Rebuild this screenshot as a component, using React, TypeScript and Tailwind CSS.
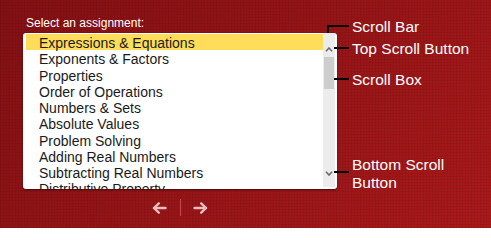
import React from "react";

const items = [
  "Expressions & Equations",
  "Exponents & Factors",
  "Properties",
  "Order of Operations",
  "Numbers & Sets",
  "Absolute Values",
  "Problem Solving",
  "Adding Real Numbers",
  "Subtracting Real Numbers",
  "Distributive Property",
];

function Chevron({ up }: { up?: boolean }) {
  return (
    <svg width="8" height="5" viewBox="0 0 8 5" className="block">
      <path
        d={up ? "M1 4.2 L4 1 L7 4.2" : "M1 0.8 L4 4 L7 0.8"}
        fill="none"
        stroke="#6b6b6b"
        strokeWidth="1.6"
      />
    </svg>
  );
}

function Arrow({ left }: { left?: boolean }) {
  return (
    <svg width="15" height="12" viewBox="0 0 15 12" className="block">
      <g
        fill="none"
        stroke="#eebcbc"
        strokeWidth="2.4"
        strokeLinecap="round"
        strokeLinejoin="round"
        transform={left ? undefined : "translate(15 0) scale(-1 1)"}
      >
        <path d="M2 6 H13.5" />
        <path d="M6.8 1.4 L2 6 L6.8 10.6" />
      </g>
    </svg>
  );
}

export default function App() {
  return (
    <div className="relative w-[491px] h-[228px] overflow-hidden font-['Liberation_Sans',Arial,sans-serif] bg-[repeating-linear-gradient(90deg,rgba(0,0,0,0.05)_0px,rgba(0,0,0,0.05)_1px,transparent_1px,transparent_3px),repeating-linear-gradient(0deg,rgba(0,0,0,0.05)_0px,rgba(0,0,0,0.05)_1px,transparent_1px,transparent_3px),linear-gradient(135deg,#821013,#a9191a)]">
      <div className="flex flex-col pl-[23px] pt-[14px] w-[337px]">
        <div className="pl-[3px] h-[19px] text-[12px] leading-[18px] text-white">
          Select an assignment:
        </div>
        <div className="flex w-[314px] h-[155.5px] bg-white rounded-[3px] overflow-hidden shadow-[0_1px_2px_rgba(0,0,0,0.55)]">
          <div className="flex-1 pt-[1px] pl-[3px] overflow-hidden">
            {items.map((t, i) => (
              <div
                key={t}
                className={
                  i === 0
                    ? "h-[16.25px] pl-[13px] text-[14px] leading-[18.5px] text-[#1a1a1a] whitespace-nowrap bg-[#fddd5a]"
                    : "h-[16.25px] pl-[13px] text-[14px] leading-[18.5px] text-[#1a1a1a] whitespace-nowrap"
                }
              >
                {t}
              </div>
            ))}
          </div>
          <div className="flex flex-col items-center w-[12px] mr-[2px] mb-[2px] pt-[14px] pb-[11px] bg-[#ececec]">
            <Chevron up />
            <div className="mt-[5px] w-[10px] h-[32px] bg-[#cdcdcd]" />
            <div className="flex-1" />
            <Chevron />
          </div>
        </div>
        <div className="flex items-center justify-center mt-[10.5px] w-[314px]">
          <Arrow left />
          <div className="ml-[13px] w-[1px] h-[17px] bg-[#c24a4a]" />
          <div className="ml-[12px]">
            <Arrow />
          </div>
        </div>
      </div>

      {/* callouts */}
      <div className="absolute left-[327px] top-[25px] w-[2px] h-[8px] bg-black" />
      <div className="absolute left-[327px] top-[25px] w-[22px] h-[2px] bg-black" />
      <div className="absolute left-[352px] top-[17.5px] text-[15.5px] leading-[18px] text-white">Scroll Bar</div>

      <div className="absolute left-[334px] top-[47px] w-[15px] h-[2px] bg-black" />
      <div className="absolute left-[352px] top-[39.5px] text-[15.5px] leading-[18px] text-white">Top Scroll Button</div>

      <div className="absolute left-[334px] top-[78px] w-[15px] h-[2px] bg-black" />
      <div className="absolute left-[352px] top-[70.5px] text-[15.5px] leading-[18px] text-white">Scroll Box</div>

      <div className="absolute left-[334px] top-[171px] w-[15px] h-[2px] bg-black" />
      <div className="absolute left-[352px] top-[155.5px] text-[15.5px] leading-[18px] text-white">
        Bottom Scroll
        <br />
        Button
      </div>
    </div>
  );
}
